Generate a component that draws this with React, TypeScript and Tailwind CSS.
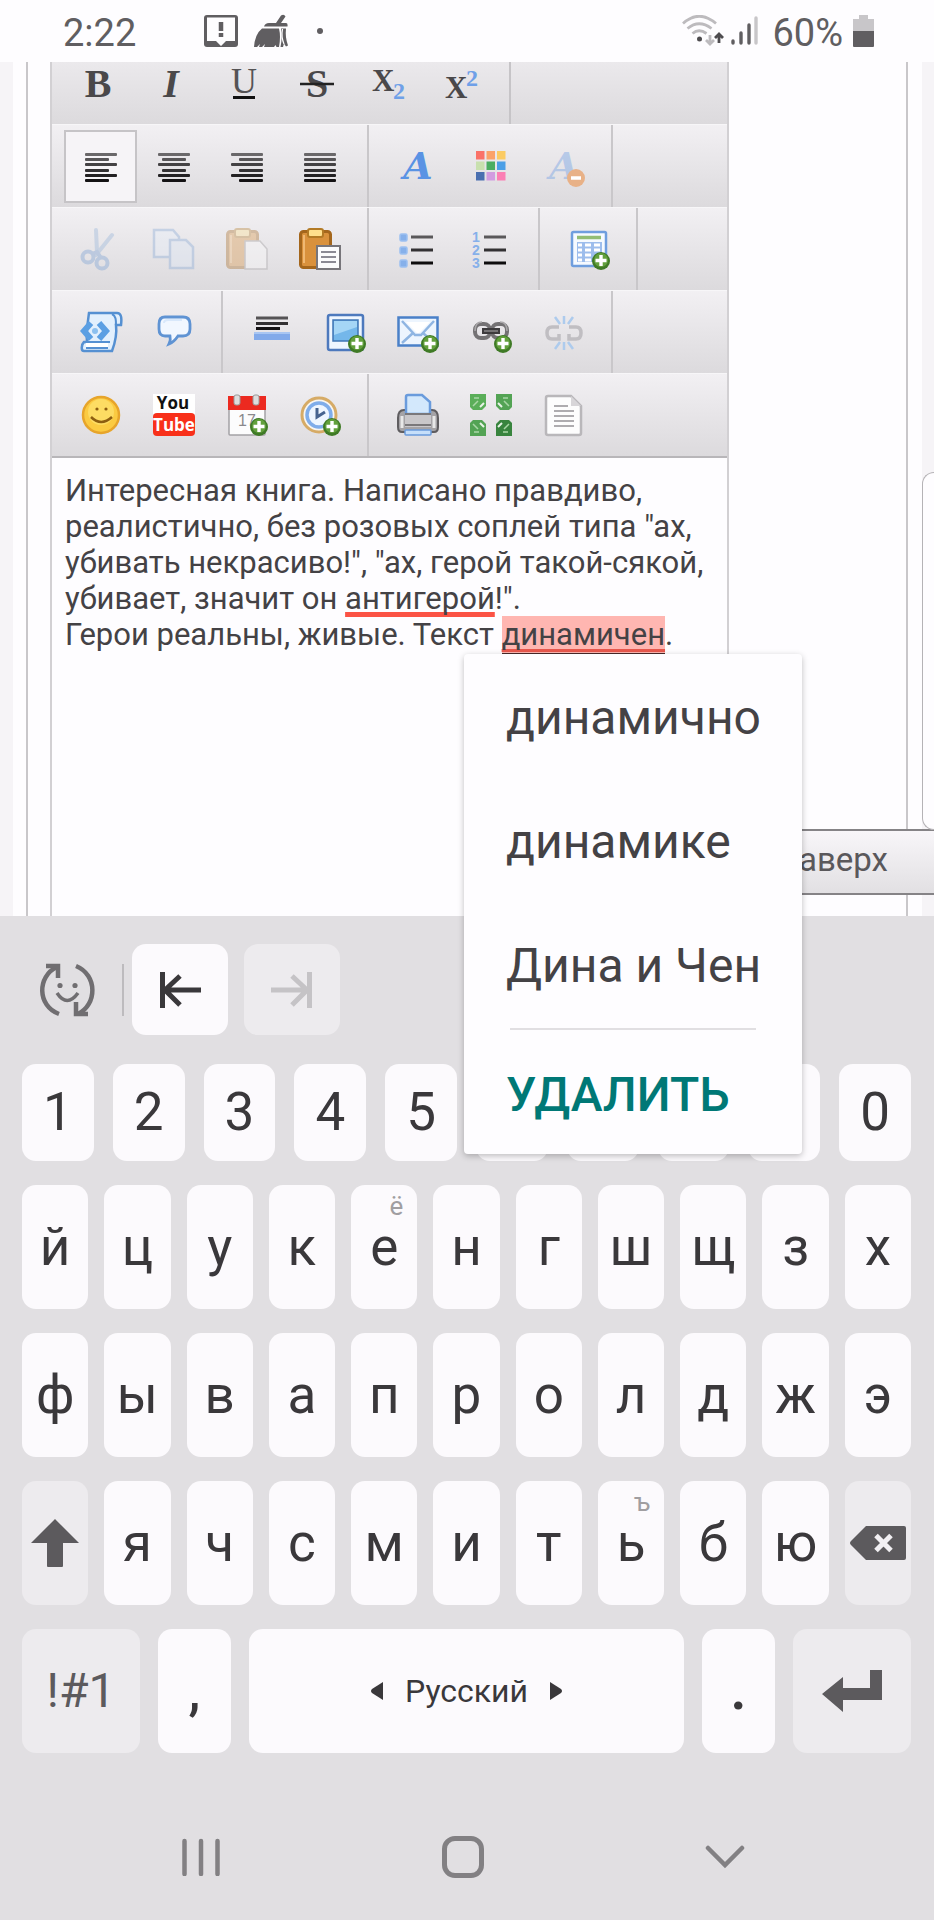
import type { ReactNode } from "react";

function Icon({ children, faded }: { children: ReactNode; faded?: boolean }) {
  return (
    <svg
      viewBox="0 0 42 42"
      className={faded ? "h-[42px] w-[42px] overflow-visible opacity-35" : "h-[42px] w-[42px] overflow-visible"}
      aria-hidden="true"
    >
      {children}
    </svg>
  );
}

function Plus() {
  return (
    <g>
      <circle cx="33" cy="33" r="9" fill="#3f7a26" />
      <circle cx="33" cy="32" r="7" fill="#62a03c" />
      <path d="M33 27v11M27.5 32.500h11" stroke="#fff" strokeWidth="3.400" />
    </g>
  );
}

const lineInk = ["#6a686a", "#575557", "#444244", "#333133", "#232123", "#141214"];
const lineY = [9, 14, 19, 25, 30, 35];

function Lines({ short, from }: { short: number; from: number }) {
  return (
    <Icon>
      {lineY.map((y, i) => {
        const x = i % 2 ? from : 5;
        const w = i % 2 ? short : 32;
        return <rect key={y} x={x} y={y - 1} width={w} height="3" rx="1" fill={lineInk[i]} />;
      })}
    </Icon>
  );
}

function Serif({ ch, italic }: { ch: string; italic?: boolean }) {
  return (
    <text
      x="21"
      y="35"
      textAnchor="middle"
      fontSize="40"
      fill="#4a484a"
      fontFamily="'Liberation Serif', serif"
      fontWeight="700"
      fontStyle={italic ? "italic" : "normal"}
    >
      {ch}
    </text>
  );
}

function Script({ baseX, baseTwo }: { baseX: number; baseTwo: number }) {
  return (
    <Icon>
      <text x="3" y={baseX} fontSize="31" fontWeight="700" fill="#4a484a" fontFamily="'Liberation Serif', serif">
        X
      </text>
      <text x="24" y={baseTwo} fontSize="24" fontWeight="700" fill="#6fa0e8" fontFamily="'Liberation Serif', serif">
        2
      </text>
    </Icon>
  );
}

function Clipboard() {
  return (
    <g>
      <rect x="1.500" y="3.500" width="30" height="36" rx="3" fill="#d9913c" stroke="#a4661c" strokeWidth="3" />
      <path d="M5 7v28" stroke="#f0b872" strokeWidth="2" />
      <rect x="9" y="1" width="15" height="8" rx="2" fill="#ffdf8c" stroke="#b37a25" strokeWidth="2" />
    </g>
  );
}

function LetterA() {
  return (
    <text x="21" y="34" textAnchor="middle" fontSize="38" fontWeight="700" fontStyle="italic" fill="#5a93e4" fontFamily="'DejaVu Serif', serif">
      A
    </text>
  );
}

function Corner({ x, y, flipX, flipY, fill }: { x: number; y: number; flipX: number; flipY: number; fill: string }) {
  return (
    <g transform={`translate(${x} ${y}) scale(${flipX} ${flipY})`}>
      <path d="M-8-8H8V4L4 8H-5L-8 5Z" fill={fill} />
      <path d="M-5 4L0-1M-4-4h5" stroke="#a9d6a6" strokeWidth="1.500" />
      <path d="M2 5l4-4" stroke="#e9f4e8" strokeWidth="2" />
    </g>
  );
}

const icons: Record<string, ReactNode> = {
  bold: (
    <Icon>
      <Serif ch="B" />
    </Icon>
  ),
  italic: (
    <Icon>
      <Serif ch="I" italic />
    </Icon>
  ),
  underline: (
    <Icon>
      <text x="21" y="31" textAnchor="middle" fontSize="36" fill="#555355" fontFamily="'Liberation Serif', serif">
        U
      </text>
      <path d="M10 35.500h22" stroke="#111" strokeWidth="3" />
    </Icon>
  ),
  strike: (
    <Icon>
      <Serif ch="S" />
      <path d="M4 22h34" stroke="#222" strokeWidth="2.500" />
    </Icon>
  ),
  sub: <Script baseX={29} baseTwo={37} />,
  sup: <Script baseX={36} baseTwo={24} />,
  left: <Lines short={24} from={5} />,
  center: <Lines short={24} from={9} />,
  right: <Lines short={24} from={13} />,
  justify: <Lines short={32} from={5} />,
  font: (
    <Icon>
      <LetterA />
    </Icon>
  ),
  color: (
    <Icon>
      {["#fa7268", "#fba268", "#fbcb63", "#c8e0ae", "#4bad61", "#4c9fe6", "#4a6fb0", "#d29be0", "#fb7fb4"].map((c, i) => (
        <rect key={c} x={6 + (i % 3) * 10.5} y={6 + Math.floor(i / 3) * 10.5} width="8.500" height="8.500" fill={c} />
      ))}
    </Icon>
  ),
  clear: (
    <Icon>
      <g opacity="0.350">
        <LetterA />
      </g>
      <circle cx="33" cy="33" r="9" fill="#e8b187" />
      <path d="M28 33h10" stroke="#fff" strokeWidth="3.500" />
    </Icon>
  ),
  cut: (
    <Icon faded>
      <path d="M16 2l1 22M32 7L16 27" stroke="#8fb0d8" strokeWidth="4" strokeLinecap="round" />
      <circle cx="8" cy="29" r="5.500" fill="none" stroke="#6f9ad2" strokeWidth="4" />
      <circle cx="22" cy="35" r="5.500" fill="none" stroke="#6f9ad2" strokeWidth="4" />
      <path d="M12 26l5-2 4 6" fill="none" stroke="#6f9ad2" strokeWidth="4" />
    </Icon>
  ),
  copy: (
    <Icon faded>
      <path d="M1 2h19l6 7v20H1z" fill="#e6effb" stroke="#7fa5d6" strokeWidth="2.500" />
      <path d="M17 12h16l7 7v21H17z" fill="#dce8f8" stroke="#7fa5d6" strokeWidth="2.500" />
    </Icon>
  ),
  paste: (
    <Icon faded>
      <Clipboard />
      <path d="M19 13h15l7 8v20H19z" fill="#fff" stroke="#9a989a" strokeWidth="1.500" />
    </Icon>
  ),
  pasteText: (
    <Icon>
      <Clipboard />
      <rect x="18" y="18" width="23" height="23" fill="#fbfbfc" stroke="#77757a" strokeWidth="2" />
      <path d="M22 24h15M22 29h15M22 34h15" stroke="#8b8a94" strokeWidth="2" />
    </Icon>
  ),
  bullets: (
    <Icon>
      {[9, 22, 35].map((y, i) => (
        <g key={y}>
          <rect x="3" y={y - 3} width="7" height="7" rx="1.500" fill="#86b0ea" stroke="#9cc0f1" strokeWidth="1.500" />
          <path d={`M14 ${y}h22`} stroke={["#5a585a", "#333133", "#0d0c0d"][i]} strokeWidth="3" />
        </g>
      ))}
    </Icon>
  ),
  numbers: (
    <Icon>
      {[9, 22, 35].map((y, i) => (
        <g key={y}>
          <text x="2" y={y + 5} fontSize="14" fontWeight="700" fill="#86b0ea" fontFamily="'Liberation Sans', sans-serif">
            {i + 1}
          </text>
          <path d={`M14 ${y}h22`} stroke={["#5a585a", "#333133", "#0d0c0d"][i]} strokeWidth="3" />
        </g>
      ))}
    </Icon>
  ),
  table: (
    <Icon>
      <rect x="4" y="4" width="34" height="34" rx="1.500" fill="#f6faff" stroke="#6f9ede" strokeWidth="2.500" />
      <path d="M9 9.500h24" stroke="#92bd74" strokeWidth="3.500" />
      <rect x="9" y="14" width="25" height="20" fill="#9dbdec" />
      <path d="M10 17h4M17 17h6M26 17h6M10 22h4M17 22h6M26 22h6M10 27h4M17 27h6M10 32h4M17 32h6" stroke="#fff" strokeWidth="3" />
      <Plus />
    </Icon>
  ),
  source: (
    <Icon>
      <path d="M9 2h28c4 0 5 4 4 12h-5c1 8-1 18-4 26H4c-3 0-3-6 0-9h3c-1-9 1-22 2-29z" fill="#e3f0fd" stroke="#5590d2" strokeWidth="2.500" />
      <path d="M32 3c4 2 4 6 4 11" fill="none" stroke="#5590d2" strokeWidth="2" />
      <path d="M6 34h22" stroke="#fff" strokeWidth="4" />
      <path d="M5 31h25M6 37h22" stroke="#5590d2" strokeWidth="2" />
      <path d="M11 12L4 20l7 8M19 12l7 8-7 8" fill="none" stroke="#5b9fe3" strokeWidth="6" />
      <circle cx="15" cy="20" r="3" fill="#8cc0f0" />
    </Icon>
  ),
  quote: (
    <Icon>
      <path d="M12 6h18q7 0 7 7v5q0 7-7 7h-5q-4 6-9 8 2-4 1-8h-5q-6 0-6-7v-5q0-7 6-7z" fill="#f1f7ff" stroke="#5f93d3" strokeWidth="2.800" />
      <path d="M11 12q0-3 4-3h14" fill="none" stroke="#d8e8fb" strokeWidth="2" />
    </Icon>
  ),
  rule: (
    <Icon>
      <path d="M5 7h32" stroke="#555355" strokeWidth="3" />
      <path d="M5 12.500h32" stroke="#333133" strokeWidth="3" />
      <path d="M5 17.500h24" stroke="#141214" strokeWidth="3" />
      <rect x="3" y="21" width="36" height="8" fill="#82aaea" />
      <path d="M3 22h36" stroke="#a9c6f2" strokeWidth="2" />
    </Icon>
  ),
  image: (
    <Icon>
      <rect x="4" y="4" width="35" height="35" rx="2" fill="#eef6ff" stroke="#4d79bd" strokeWidth="2.500" />
      <rect x="9" y="9" width="25" height="21" fill="#74b7ea" stroke="#3f76b5" strokeWidth="1.500" />
      <path d="M10 10h23v6l-23 8z" fill="#a5d6f6" />
      <Plus />
    </Icon>
  ),
  mail: (
    <Icon>
      <rect x="1.500" y="6.500" width="39" height="28" fill="#edf5fe" stroke="#4a80c8" strokeWidth="2.500" />
      <path d="M5 10l13 14h6l13-14M5 32l11-10M37 32L26 22" fill="none" stroke="#8fb5e2" strokeWidth="2.500" />
      <path d="M9 11l11 11h2l11-11z" fill="#fff" />
      <Plus />
    </Icon>
  ),
  link: (
    <Icon>
      <rect x="5" y="13" width="15" height="14" rx="6" fill="none" stroke="#747274" strokeWidth="4" />
      <rect x="22" y="13" width="15" height="14" rx="6" fill="none" stroke="#747274" strokeWidth="4" />
      <path d="M5 20q0-9 7-9M37 20q0-9-7-9" fill="none" stroke="#a9a7a9" strokeWidth="1.500" />
      <path d="M12 20h18" stroke="#3d3b3d" strokeWidth="6" />
      <path d="M14 20h14" stroke="#8a888a" strokeWidth="1.500" />
      <Plus />
    </Icon>
  ),
  unlink: (
    <Icon>
      <path d="M16 16H9q-5 0-5 6t5 6h7v-5M26 16h7q5 0 5 6t-5 6h-7v-5" fill="none" stroke="#c0bec2" strokeWidth="3.500" />
      <path d="M21 5v8M12 6l5 7M30 6l-5 7M21 39v-8M12 38l5-7M30 38l-5-7" stroke="#adcbed" strokeWidth="2.500" />
    </Icon>
  ),
  smile: (
    <Icon>
      <circle cx="21" cy="21" r="18" fill="#fbcb42" stroke="#e7a52b" strokeWidth="2.500" />
      <circle cx="21" cy="18" r="13" fill="#fddc63" />
      <circle cx="17" cy="15" r="1.600" fill="#8d5e10" />
      <circle cx="26" cy="15" r="1.600" fill="#8d5e10" />
      <path d="M11 23q10 10 21 0" fill="none" stroke="#8d5e10" strokeWidth="2.500" />
    </Icon>
  ),
  youtube: (
    <Icon>
      <rect width="42" height="20" fill="#fff" />
      <rect y="19" width="42" height="23" rx="4" fill="#f8301a" />
      <text x="20" y="15" textAnchor="middle" fontSize="17" fontWeight="700" fill="#111" fontFamily="'Open Sans', sans-serif">
        You
      </text>
      <text x="21" y="37" textAnchor="middle" fontSize="17" fontWeight="700" fill="#fff" fontFamily="'Open Sans', sans-serif">
        Tube
      </text>
    </Icon>
  ),
  calendar: (
    <Icon>
      <rect x="3" y="3" width="36" height="38" rx="1" fill="#fcfcfd" stroke="#a3a1a5" strokeWidth="1.500" />
      <rect x="2" y="2" width="38" height="14" fill="#ec2a20" />
      <rect x="8" y="1" width="6" height="10" rx="2" fill="#ddd" stroke="#999" strokeWidth="1" />
      <rect x="27" y="1" width="6" height="10" rx="2" fill="#ddd" stroke="#999" strokeWidth="1" />
      <text x="12" y="32" fontSize="16" fill="#8a888c" fontFamily="'Liberation Sans', sans-serif">
        17
      </text>
      <Plus />
    </Icon>
  ),
  clock: (
    <Icon>
      <circle cx="20" cy="21" r="17" fill="#f8f6f2" stroke="#d6ab66" strokeWidth="3" />
      <circle cx="20" cy="21" r="12" fill="#eef6ff" stroke="#7fadea" strokeWidth="3.500" />
      <path d="M18 14v9l8-5" fill="none" stroke="#47648f" strokeWidth="3" />
      <Plus />
    </Icon>
  ),
  print: (
    <Icon>
      <path d="M7 16h28q6 0 6 8v9q0 5-4 5H5q-4 0-4-5v-9q0-8 6-8z" fill="#a5a3a6" stroke="#5f5d60" strokeWidth="2" />
      <path d="M9 20V3q0-2 2-2h14l8 7v12z" fill="#d3e8fc" stroke="#6a9bdc" strokeWidth="2.500" />
      <rect x="8" y="20" width="26" height="13" fill="#c9c7ca" />
      <path d="M8 20h26M8 31h26" stroke="#7a787b" strokeWidth="2" />
      <path d="M5 22v12M37 22v12" stroke="#e8e8e8" strokeWidth="3" />
      <rect x="8" y="36" width="26" height="5" rx="1" fill="#c6dffa" stroke="#6a9bdc" strokeWidth="1.500" />
    </Icon>
  ),
  maximize: (
    <Icon>
      <Corner x={8} y={8} flipX={1} flipY={1} fill="#5aae59" />
      <Corner x={34} y={8} flipX={-1} flipY={1} fill="#53a354" />
      <Corner x={8} y={34} flipX={1} flipY={-1} fill="#53a354" />
      <Corner x={34} y={34} flipX={-1} flipY={-1} fill="#38843e" />
    </Icon>
  ),
  page: (
    <Icon>
      <path d="M5 2h23l10 10v27q0 2-2 2H5q-2 0-2-2V4q0-2 2-2z" fill="#fdfdfd" stroke="#b9b7ba" strokeWidth="2.500" />
      <path d="M28 2v10h10z" fill="#d8d6d9" />
      <path d="M11 12h14M11 17h20M11 22h20M11 27h20M11 32h20" stroke="#aeacaf" strokeWidth="2" />
    </Icon>
  ),
};

type Tool = [string, string];

const toolRows: Tool[][][] = [
  [
    [
      ["left", "По левому краю"],
      ["center", "По центру"],
      ["right", "По правому краю"],
      ["justify", "По ширине"],
    ],
    [
      ["font", "Шрифт"],
      ["color", "Цвет"],
      ["clear", "Убрать форматирование"],
    ],
    [],
  ],
  [
    [
      ["cut", "Вырезать"],
      ["copy", "Копировать"],
      ["paste", "Вставить"],
      ["pasteText", "Вставить текст"],
    ],
    [
      ["bullets", "Список"],
      ["numbers", "Нумерованный список"],
    ],
    [["table", "Таблица"]],
    [],
  ],
  [
    [
      ["source", "Код"],
      ["quote", "Цитата"],
    ],
    [
      ["rule", "Линия"],
      ["image", "Изображение"],
      ["mail", "Почта"],
      ["link", "Ссылка"],
      ["unlink", "Убрать ссылку"],
    ],
    [],
  ],
  [
    [
      ["smile", "Смайлик"],
      ["youtube", "YouTube"],
      ["calendar", "Дата"],
      ["clock", "Время"],
    ],
    [
      ["print", "Печать"],
      ["maximize", "Развернуть"],
      ["page", "Исходный текст"],
    ],
  ],
];

const firstRow: Tool[] = [
  ["bold", "Полужирный"],
  ["italic", "Курсив"],
  ["underline", "Подчёркнутый"],
  ["strike", "Зачёркнутый"],
  ["sub", "Нижний индекс"],
  ["sup", "Верхний индекс"],
];

function Toolbar() {
  return (
    <div className="border-b-2 border-[#b8b6b9]">
      <div className="flex h-[62px] bg-linear-to-b from-[#ebe9ec] to-[#dcdadd] pl-0.5">
        <div className="flex items-start border-r-2 border-[#c6c4c7] pr-2.5 pl-[7px]">
          {firstRow.map(([id, label]) => (
            <button key={id} aria-label={label} className="flex w-[73px] justify-center">
              {icons[id]}
            </button>
          ))}
        </div>
      </div>
      {toolRows.map((row, r) => (
        <div key={r} className="flex h-[83px] gap-0.5 border-t border-[#f7f6f8] bg-linear-to-b from-[#f2f0f3] to-[#dcdadd] pl-0.5">
          {row.map((group, g) => (
            <div
              key={g}
              className={
                g < row.length - 1
                  ? "flex items-center border-r-2 border-[#c9c7ca] pr-[11px] pl-2.5"
                  : "flex flex-1 items-center pl-2.5"
              }
            >
              {group.map(([id, label]) => (
                <button
                  key={id}
                  aria-label={label}
                  className={
                    id === "left"
                      ? "flex h-[73px] w-[73px] items-center justify-center border-2 border-[#c6c4c7] bg-[#f6f4f7]"
                      : "flex h-[73px] w-[73px] items-center justify-center"
                  }
                >
                  {icons[id]}
                </button>
              ))}
            </div>
          ))}
        </div>
      ))}
    </div>
  );
}

function StatusBar() {
  return (
    <header className="flex h-[62px] items-center bg-[#fefdff] pr-[60px] pl-[63px] text-[38px] leading-none text-[#605e61]">
      <span className="pt-1">2:22</span>
      <svg viewBox="0 0 34 32" className="ml-[68px] h-8 w-[34px]" aria-label="Уведомление">
        <path d="M3 0h28q3 0 3 3v26q0 3-3 3H3q-3 0-3-3V3q0-3 3-3z" fill="#605e61" />
        <path d="M3 2.500h28V26h-9l-5 5-5-5H3z" fill="#fefdff" />
        <path d="M17 7v9M17 18v4" stroke="#605e61" strokeWidth="4.500" />
      </svg>
      <svg viewBox="0 0 34 34" className="ml-4 h-[34px] w-[34px]" aria-label="Очистка">
        <path d="M22 9L27 1.500q3-2 4.500 1L27 9h5q2 0 1.500 3.500H10Q11 9 15 9z" fill="#605e61" />
        <path d="M8 14.500h17q2 8 0 18.500h-2.500l-1-2-1.500 2h-10l1-3-3 3H5l1-3-3 3H0Q1 20 8 14.500z" fill="#605e61" />
        <path d="M27 14.500h5q-1 9 2 17l-2 1-2-3-1 3.500h-2.500q2-9 .5-18.500z" fill="#605e61" />
        <path d="M28.500 15q-1.500 8 1.500 15" fill="none" stroke="#fefdff" strokeWidth="1.200" />
      </svg>
      <span className="ml-[29px] h-1.5 w-1.5 rounded-full bg-[#605e61]" />
      <svg viewBox="0 0 42 32" className="ml-auto h-8 w-[42px]" fill="none" aria-label="Wi-Fi">
        <path d="M1 8.500Q17-6 34 8.500M5.500 13.500Q17 4 29.500 13.500M10.500 18.500Q17 13 24.500 18.500" stroke="#bdbbbe" strokeWidth="2.800" />
        <circle cx="17.500" cy="24" r="2.500" fill="#4e4c4f" />
        <path d="M28 20v9M24 25l4 4 4-4" stroke="#bdbbbe" strokeWidth="2.800" />
        <path d="M37 28v-9M33 23l4-4 4 4" stroke="#4e4c4f" strokeWidth="2.800" />
      </svg>
      <svg viewBox="0 0 28 30" className="ml-1.5 h-[30px] w-7" strokeWidth="3.400" strokeLinecap="round" aria-label="Сигнал">
        <path d="M3 25v2M11 17v10M19 9v18" stroke="#605e61" />
        <path d="M26 2v25" stroke="#c8c6c9" />
      </svg>
      <span className="ml-[14px] pt-1">60%</span>
      <svg viewBox="0 0 21 32" className="ml-2.5 h-8 w-[21px]" aria-label="Батарея">
        <path d="M6 0h9v4h6v12H0V4h6z" fill="#c8c6c9" />
        <path d="M0 16h21v15q0 1-1 1H1q-1 0-1-1z" fill="#605e61" />
      </svg>
    </header>
  );
}

function Key({ children, hint, dim, label }: { children: ReactNode; hint?: string; dim?: boolean; label?: string }) {
  return (
    <button
      aria-label={label}
      className={
        dim
          ? "relative flex h-full w-full items-center justify-center rounded-[14px] bg-[#edebee] text-5xl leading-none text-[#5c5a5d]"
          : "relative flex h-full w-full items-center justify-center rounded-[14px] bg-[#fcfafd] text-[53px] leading-none text-[#3a383b]"
      }
    >
      {children}
      {hint && <span className="absolute top-2 right-3.5 text-[26px] leading-none text-[#a09ea1]">{hint}</span>}
    </button>
  );
}

const hints: Record<string, string> = { е: "ё", ь: "ъ" };

function Keyboard() {
  return (
    <section aria-label="Клавиатура" className="flex flex-1 flex-col bg-[#e1dfe2] pt-7 pr-[23px] pl-[22px]">
      <div className="flex h-[91px] items-center">
        <button aria-label="Смайлики" className="ml-[17px]">
          <svg viewBox="0 0 56 56" className="h-14 w-14" fill="none" stroke="#706e71" strokeWidth="4.500">
            <path d="M20 52C-2 44-2 14 18 5M37 4c22 9 21 39 2 48" />
            <path d="M7 4h12v12M49 52H37V40" />
            <path d="M18 31q10 15 21 0" strokeWidth="3.500" />
            <circle cx="21" cy="23.500" r="2.600" fill="#706e71" stroke="none" />
            <circle cx="36" cy="23.500" r="2.600" fill="#706e71" stroke="none" />
          </svg>
        </button>
        <span className="ml-[27px] h-[52px] w-0.5 bg-[#bdbbbe]" />
        <button aria-label="В начало" className="ml-2 flex h-full w-24 items-center justify-center rounded-[14px] bg-[#fcfafd]">
          <svg viewBox="0 0 42 36" className="h-9 w-[42px]" fill="none" stroke="#3a383b" strokeWidth="5">
            <path d="M3.500 0v36M6 18h36M21 4L6 18l15 15" />
          </svg>
        </button>
        <button aria-label="В конец" disabled className="ml-4 flex h-full w-24 items-center justify-center rounded-[14px] bg-[#edebee]">
          <svg viewBox="0 0 42 36" className="h-9 w-[42px]" fill="none" stroke="#c5c3c6" strokeWidth="5">
            <path d="M38.500 0v36M36 18H0M21 4l15 14-15 15" />
          </svg>
        </button>
      </div>
      <div className="mt-[29px] grid h-[97px] grid-cols-10 gap-[19px]">
        {"1234567890".split("").map((k) => (
          <Key key={k}>{k}</Key>
        ))}
      </div>
      {["йцукенгшщзх", "фывапролджэ"].map((row) => (
        <div key={row} className="mt-6 grid h-[124px] grid-cols-11 gap-4">
          {row.split("").map((k) => (
            <Key key={k} hint={hints[k]}>
              {k}
            </Key>
          ))}
        </div>
      ))}
      <div className="mt-6 grid h-[124px] grid-cols-11 gap-4">
        <Key dim label="Shift">
          <svg viewBox="0 0 48 48" className="h-12 w-12 shrink-0" fill="#5c5a5d">
            <path d="M24 0l24 24H32v23q0 1-1 1H17q-1 0-1-1V24H0z" />
          </svg>
        </Key>
        {"ячсмитьбю".split("").map((k) => (
          <Key key={k} hint={hints[k]}>
            {k}
          </Key>
        ))}
        <Key dim label="Удалить символ">
          <svg viewBox="0 0 56 34" className="h-[34px] w-14 shrink-0">
            <path d="M16 0h38q2 0 2 2v30q0 2-2 2H16L1 19q-2-2 0-4z" fill="#5c5a5d" />
            <path d="M26 9.500l15 15M41 9.500l-15 15" stroke="#f2f0f3" strokeWidth="5" />
          </svg>
        </Key>
      </div>
      <div className="mt-6 flex h-[124px] gap-[18px]">
        <div className="w-[118px]">
          <Key dim>!#1</Key>
        </div>
        <div className="w-[73px] font-medium">
          <Key>,</Key>
        </div>
        <div className="flex-1">
          <Key>
            <span className="flex items-center gap-[22px] text-[32px]">
              <svg viewBox="0 0 12 18" className="h-[18px] w-3" fill="#3a383b">
                <path d="M12 0v18L1 11q-2-2 0-4z" />
              </svg>
              Русский
              <svg viewBox="0 0 12 18" className="h-[18px] w-3" fill="#3a383b">
                <path d="M0 0v18l11-7q2-2 0-4z" />
              </svg>
            </span>
          </Key>
        </div>
        <div className="w-[73px] font-bold">
          <Key>.</Key>
        </div>
        <div className="w-[118px]">
          <Key dim label="Ввод">
            <svg viewBox="0 0 60 42" className="h-[42px] w-[60px]" fill="#5c5a5d">
              <path d="M0 24L21 7v11h27V0h12v30H21v12z" />
            </svg>
          </Key>
        </div>
      </div>
      <nav className="flex flex-1 items-center justify-center gap-[220px] pt-10 pr-2">
        <button aria-label="Недавние" className="flex w-[42px] justify-center">
          <svg viewBox="0 0 38 38" className="h-[38px] w-[38px]" stroke="#828083" strokeWidth="4.500" strokeLinecap="round">
            <path d="M2.500 3v33M19 3v33M35.500 3v33" />
          </svg>
        </button>
        <button aria-label="Домой" className="h-[42px] w-[42px] rounded-[13px] border-[5px] border-[#828083]" />
        <button aria-label="Скрыть" className="flex w-[42px] justify-center">
          <svg viewBox="0 0 40 24" className="h-6 w-10" fill="none" stroke="#828083" strokeWidth="4.500" strokeLinecap="round">
            <path d="M3 3l17 17L37 3" />
          </svg>
        </button>
      </nav>
    </section>
  );
}

function Suggestions() {
  return (
    <div
      role="menu"
      className="absolute top-[654px] left-[464px] z-10 flex w-[338px] flex-col rounded-sm bg-[#fefdff] px-[42px] pt-0.5 text-5xl leading-none text-[#444245] shadow-[0_2px_6px_rgba(0,0,0,0.25)]"
    >
      {["динамично", "динамике", "Дина и Чен"].map((word) => (
        <button key={word} role="menuitem" className="flex h-31 items-center text-left whitespace-nowrap">
          {word}
        </button>
      ))}
      <hr className="mx-1 border-t-2 border-[#e1dfe2]" />
      <button role="menuitem" className="flex h-31 items-center pt-1.5 font-medium text-[#007876]">
        УДАЛИТЬ
      </button>
    </div>
  );
}

export default function App() {
  return (
    <div className="relative flex min-h-screen flex-col overflow-hidden bg-[#fefdff] font-[Roboto,sans-serif]">
      <StatusBar />
      <main className="relative flex bg-[#f6f4f7] pr-3 pl-[13px]">
        <div className="flex flex-1 bg-[#fefdff] pr-3.5 pl-[13px]">
          <div className="flex-1 border-x-2 border-[#c9c7ca] pr-[177px] pl-[22px]">
            <div className="border-x-2 border-[#d2d0d3]">
              <Toolbar />
              <div
                role="textbox"
                aria-multiline="true"
                aria-label="Текст сообщения"
                contentEditable
                suppressContentEditableWarning
                className="min-h-[458px] px-[13px] pt-[15px] text-[31px] leading-9 whitespace-nowrap text-[#444245] outline-none"
              >
                Интересная книга. Написано правдиво,
                <br />
                реалистично, без розовых соплей типа "ах,
                <br />
                убивать некрасиво!", "ах, герой такой-сякой,
                <br />
                убивает, значит он{" "}
                <span className="underline decoration-[#fb5345] decoration-5 underline-offset-3 [text-decoration-skip-ink:none]">антигерой</span>!".
                <br />
                Герои реальны, живые. Текст{" "}
                <span className="border-b-2 border-[#4a2a2a] bg-[#ffb6b1] underline decoration-[#e8584d] decoration-3 underline-offset-4 [text-decoration-skip-ink:none]">
                  динамичен
                </span>
                .
              </div>
            </div>
          </div>
        </div>
        <button className="absolute right-0 bottom-[21px] flex h-[66px] w-[200px] items-center justify-end border-y-2 border-[#858386] bg-linear-to-b from-[#f8f6f9] to-[#e2e0e3] pr-[46px] pb-1 text-[33px] text-[#5a585b]">
          Наверх
        </button>
        <div className="absolute right-0 bottom-[86px] h-[358px] w-3 rounded-l-2xl border border-r-0 border-[#b5b3b6] bg-[#fefdff]" />
      </main>
      <Suggestions />
      <Keyboard />
    </div>
  );
}
